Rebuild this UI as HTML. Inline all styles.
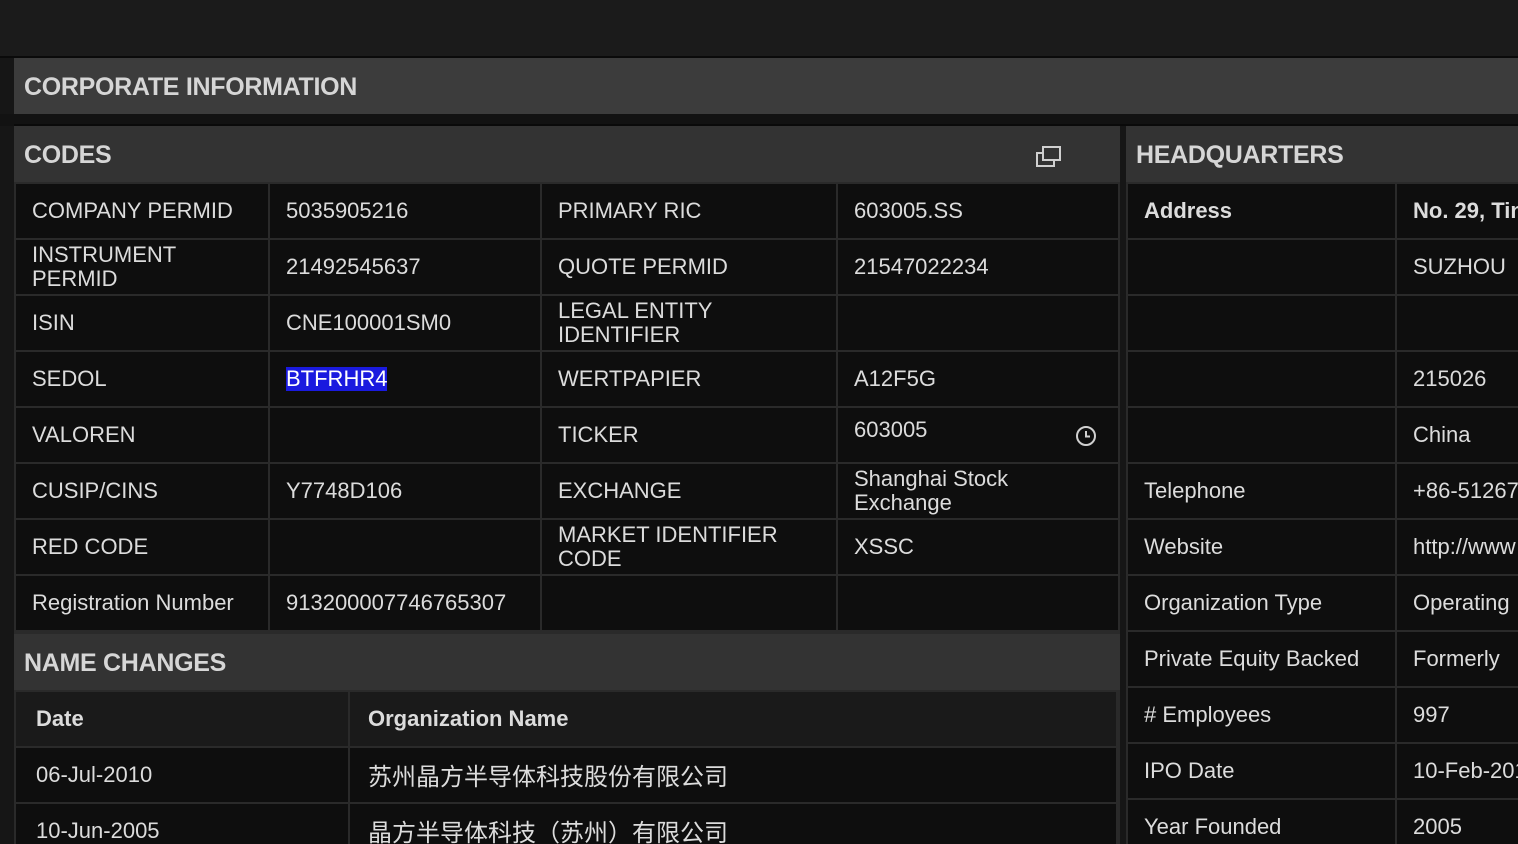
<!DOCTYPE html>
<html style="width:1518px;height:844px;overflow:hidden"><head><meta charset="utf-8"><style>
*{margin:0;padding:0;box-sizing:border-box}
body{width:1518px;height:844px;background:#161616;overflow:hidden;position:relative;font-family:"Liberation Sans","Noto Sans CJK SC",sans-serif;color:#dcdcdc}
#wrap{position:absolute;left:0;top:0;width:1518px;height:844px;overflow:hidden}
.abs{position:absolute}
.hdr{position:absolute;font-weight:bold;font-size:25px;color:#d6d6d6;display:flex;align-items:center;padding-left:10px;padding-top:3px;letter-spacing:-0.3px}
.grid{position:absolute;background:#2a2a2a;display:grid;gap:2px;padding:2px}
.grid div{background:#0e0e0e;display:flex;align-items:center;padding-left:16px;font-size:22px;line-height:24px;color:#dcdcdc;position:relative}
.b{font-weight:bold}
.cjk{font-size:24px !important;font-family:"Noto Sans CJK SC",sans-serif}
</style></head><body><div id="wrap">
<div class="abs" style="left:0;top:0;width:1518px;height:56px;background:#1b1b1b"></div>
<div class="abs" style="left:0;top:56px;width:1518px;height:2px;background:#0a0a0a"></div>
<div class="hdr" style="left:14px;top:58px;width:1504px;height:56px;background:#3c3c3c">CORPORATE INFORMATION</div>
<div class="abs" style="left:0;top:114px;width:1518px;height:12px;background:#121212"></div>
<div class="abs" style="left:14px;top:124px;width:1504px;height:2px;background:#0a0a0a"></div>

<div class="hdr" style="left:14px;top:126px;width:1106px;height:56px;background:#333">CODES</div>
<svg class="abs" style="left:1034px;top:144px" width="30" height="24" viewBox="0 0 30 24"><rect x="3" y="9" width="17" height="13" fill="none" stroke="#d0d0d0" stroke-width="2"/><rect x="9" y="3" width="17" height="13" fill="#333" stroke="#d0d0d0" stroke-width="2"/></svg>
<div class="grid" style="left:14px;top:182px;width:1106px;height:452px;grid-template-columns:252px 270px 294px 280px;grid-auto-rows:54px">
<div>COMPANY PERMID</div><div>5035905216</div><div>PRIMARY RIC</div><div>603005.SS</div>
<div>INSTRUMENT<br>PERMID</div><div>21492545637</div><div>QUOTE PERMID</div><div>21547022234</div>
<div>ISIN</div><div>CNE100001SM0</div><div>LEGAL ENTITY<br>IDENTIFIER</div><div></div>
<div>SEDOL</div><div><span style="background:#1a1adf;color:#fff">BTFRHR4</span></div><div>WERTPAPIER</div><div>A12F5G</div>
<div>VALOREN</div><div></div><div>TICKER</div><div style="align-items:flex-start;padding-top:10px">603005<svg style="position:absolute;left:237px;top:17px" width="22" height="22" viewBox="0 0 22 22"><circle cx="11" cy="11" r="9" fill="none" stroke="#d0d0d0" stroke-width="2"/><path d="M11 6v5.5h4" fill="none" stroke="#d0d0d0" stroke-width="2"/></svg></div>
<div>CUSIP/CINS</div><div>Y7748D106</div><div>EXCHANGE</div><div>Shanghai Stock<br>Exchange</div>
<div>RED CODE</div><div></div><div>MARKET IDENTIFIER<br>CODE</div><div>XSSC</div>
<div>Registration Number</div><div>913200007746765307</div><div></div><div></div>
</div>

<div class="abs" style="left:1120px;top:126px;width:6px;height:718px;background:#161616"></div>
<div class="hdr" style="left:1126px;top:126px;width:392px;height:56px;background:#333">HEADQUARTERS</div>
<div class="grid" style="left:1126px;top:182px;width:420px;height:680px;grid-template-columns:267px 148px;grid-auto-rows:54px">
<div class="b">Address</div><div class="b" style="white-space:nowrap">No. 29, Tinglan</div>
<div></div><div>SUZHOU</div>
<div></div><div></div>
<div></div><div>215026</div>
<div></div><div>China</div>
<div>Telephone</div><div style="white-space:nowrap">+86-51267</div>
<div>Website</div><div style="white-space:nowrap">http://www</div>
<div>Organization Type</div><div style="white-space:nowrap">Operating</div>
<div>Private Equity Backed</div><div style="white-space:nowrap">Formerly</div>
<div># Employees</div><div>997</div>
<div>IPO Date</div><div style="white-space:nowrap">10-Feb-2015</div>
<div>Year Founded</div><div>2005</div>
</div>

<div class="hdr" style="left:14px;top:634px;width:1106px;height:56px;background:#333">NAME CHANGES</div>
<div class="grid" style="left:14px;top:690px;width:1106px;height:170px;grid-template-columns:332px 766px;grid-auto-rows:54px">
<div class="b" style="background:#1a1a1a;padding-left:20px">Date</div><div class="b" style="background:#1a1a1a;padding-left:18px">Organization Name</div>
<div style="padding-left:20px">06-Jul-2010</div><div class="cjk" style="padding-left:18px">苏州晶方半导体科技股份有限公司</div>
<div style="padding-left:20px">10-Jun-2005</div><div class="cjk" style="padding-left:18px">晶方半导体科技（苏州）有限公司</div>
</div>
</div></body></html>
